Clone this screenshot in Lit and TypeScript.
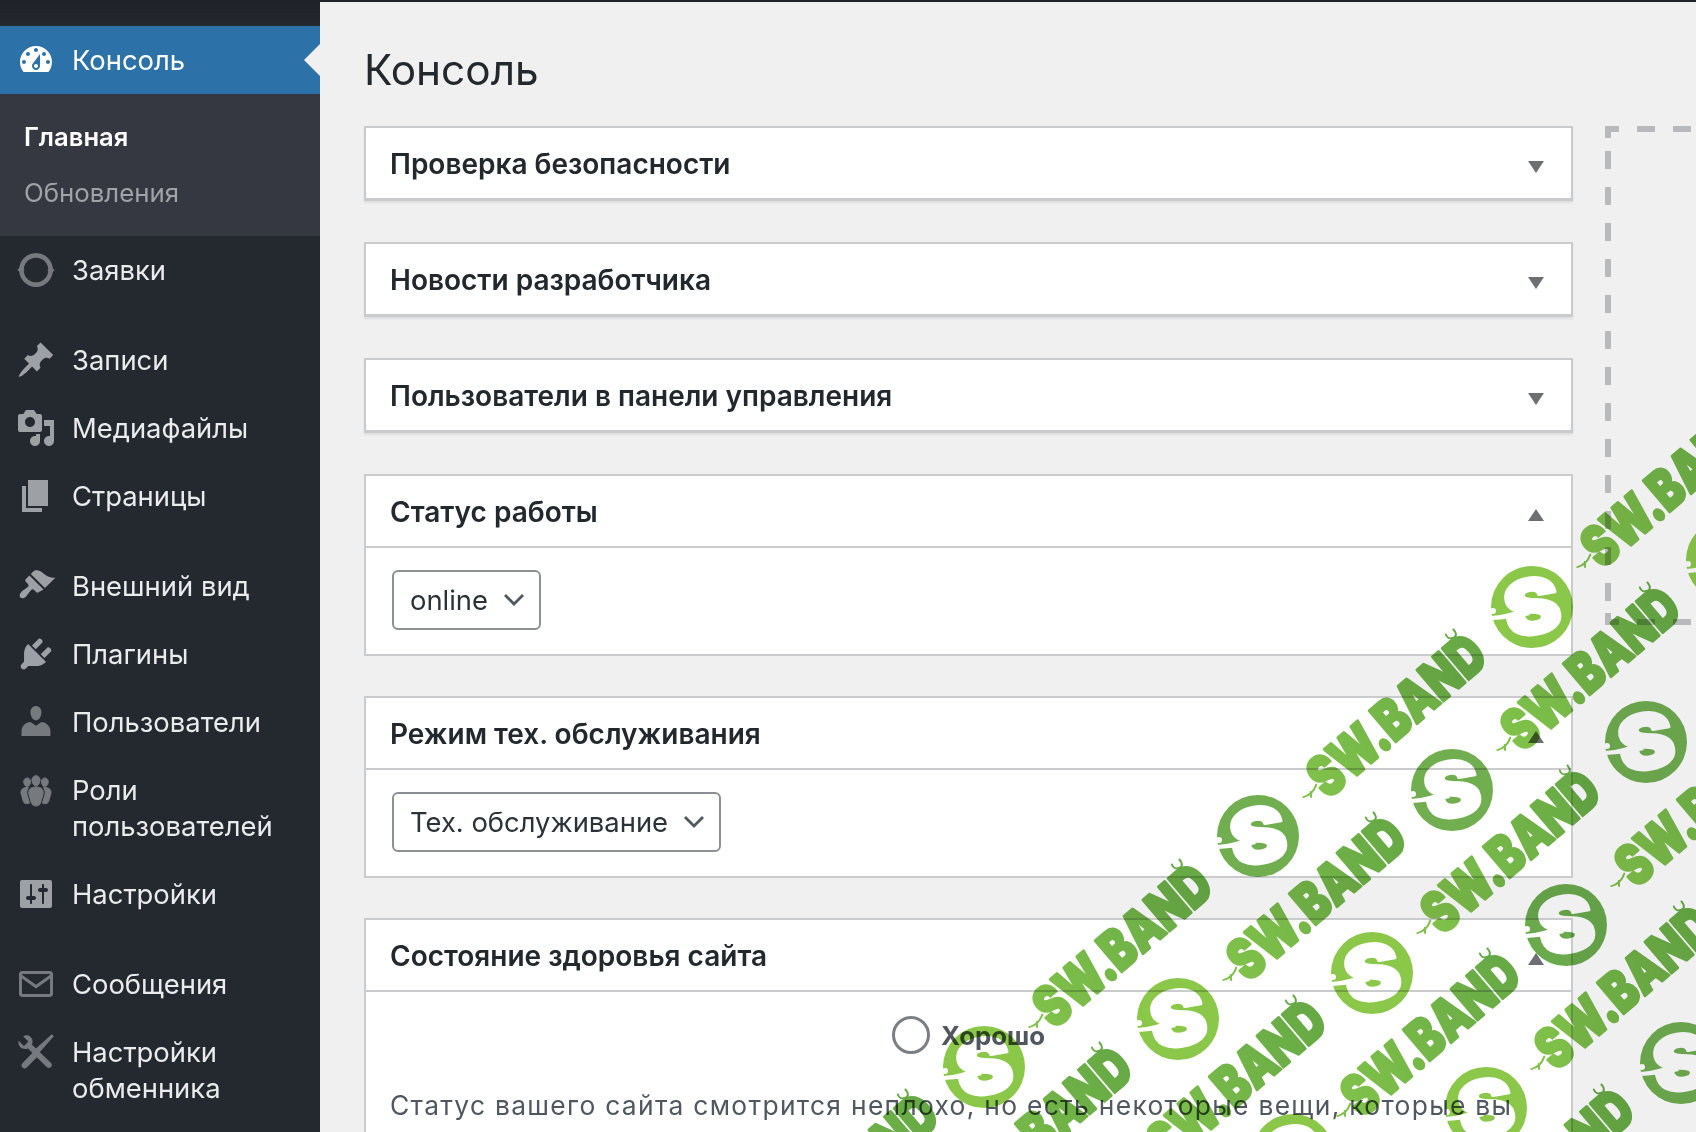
import { LitElement, html, css, svg } from 'lit';

// dashicons-style glyphs on a 20x20 box
const ICONS: Record<string, ReturnType<typeof svg>> = {
  dashboard: svg`<path d="M3.76 16h12.48c1.1-1.37 1.76-3.11 1.76-5 0-4.42-3.58-8-8-8s-8 3.58-8 8c0 1.89.66 3.63 1.76 5zM10 4c.55 0 1 .45 1 1s-.45 1-1 1-1-.45-1-1 .45-1 1-1zM6 6c.55 0 1 .45 1 1s-.45 1-1 1-1-.45-1-1 .45-1 1-1zm8 0c.55 0 1 .45 1 1s-.45 1-1 1-1-.45-1-1 .45-1 1-1zm-5.37 5.55L12 7v6c0 1.1-.9 2-2 2s-2-.9-2-2c0-.57.24-1.08.63-1.45zM4 10c.55 0 1 .45 1 1s-.45 1-1 1-1-.45-1-1 .45-1 1-1zm12 0c.55 0 1 .45 1 1s-.45 1-1 1-1-.45-1-1 .45-1 1-1zm-5 3c0-.55-.45-1-1-1s-1 .45-1 1 .45 1 1 1 1-.45 1-1z"/>`,
  ring: svg`<circle cx="10" cy="10" r="7.3" fill="none" stroke="currentColor" stroke-width="2.3"/><path d="M.6 10l1.9-1.7 1.9 1.7-1.9 1.3zM15.6 10l1.9-1.3 1.9 1.3-1.9 1.7z"/>`,
  pin: svg`<path d="M10.44 3.02l1.82-1.82 6.36 6.35-1.83 1.82c-1.05-.68-2.48-.57-3.41.36l-.75.75c-.92.93-1.04 2.35-.35 3.41l-1.83 1.82-2.41-2.41-2.8 2.79c-.42.42-3.38 2.71-3.8 2.29s1.86-3.39 2.28-3.81l2.79-2.79L4.1 9.36l1.83-1.82c1.05.69 2.48.57 3.4-.36l.75-.75c.93-.92 1.05-2.35.36-3.41z"/>`,
  media: svg`<path d="M13 11V4c0-.55-.45-1-1-1h-1.67L9 1H5L3.67 3H2c-.55 0-1 .45-1 1v7c0 .55.45 1 1 1h10c.55 0 1-.45 1-1zM7 4.5c1.38 0 2.5 1.12 2.5 2.5S8.38 9.5 7 9.5 4.5 8.38 4.5 7 5.62 4.5 7 4.5zM14 6h5v10.5c0 1.38-1.12 2.5-2.5 2.5S14 17.88 14 16.5s1.12-2.5 2.5-2.5c.17 0 .34.02.5.05V9h-3V6zm-4 8.05V13h2v3.5c0 1.38-1.12 2.5-2.5 2.5S7 17.88 7 16.5 8.12 14 9.5 14c.17 0 .34.02.5.05z"/>`,
  page: svg`<path d="M6 15V2h10v13H6zm-1 1h8v2H3V5h2v11z"/>`,
  brush: svg`<path d="M14.48 11.06L7.41 3.99l1.5-1.5c.5-.56 2.3-.47 3.51.32 1.21.8 1.43 1.28 2.91 2.1 1.18.64 2.45 1.26 4.45.85zm-.71.71L6.7 4.7 4.93 6.47c-.39.39-.39 1.02 0 1.41l1.06 1.06c.39.39.39 1.03 0 1.42-.6.6-1.43 1.11-2.21 1.69-.35.26-.7.53-1.01.84-1.11 1.12-1.2 2.2-.6 2.9.6.6 1.8.5 2.9-.6.31-.31.58-.66.84-1.01.58-.78 1.09-1.61 1.69-2.21.39-.39 1.03-.39 1.42 0l1.06 1.06c.39.39 1.02.39 1.41 0z"/>`,
  plug: svg`<path d="M13.11 4.36L9.87 7.6 8 5.73l3.24-3.24c.35-.34 1.05-.2 1.56.32.52.51.66 1.21.31 1.55zm-8 1.77l.91-1.12 9.01 9.01-1.19.84c-.71.71-2.63 1.16-3.82 1.16H6.14L4.9 17.26c-.59.59-1.54.59-2.12 0-.59-.58-.59-1.53 0-2.12l1.24-1.24v-3.88c0-1.13.4-3.19 1.09-3.89zm7.26 3.97l3.24-3.24c.34-.35 1.04-.21 1.55.31.52.51.66 1.21.31 1.55l-3.24 3.25z"/>`,
  user: svg`<path d="M10 9.25c-2.27 0-2.73-3.44-2.73-3.44C7 4.02 7.82 2 9.97 2c2.16 0 2.98 2.02 2.71 3.81 0 0-.41 3.44-2.68 3.44zm0 2.57L12.72 10c2.39 0 4.52 2.33 4.52 4.53V17H2.76v-2.47c0-2.25 1.94-4.48 4.47-4.48z"/>`,
  groups: svg`<path stroke="currentColor" stroke-width=".5" d="M8.03 4.46c-.29 1.28.55 3.46 1.97 3.46 1.41 0 2.25-2.18 1.96-3.46-.22-.98-1.08-1.63-1.96-1.63-.89 0-1.74.65-1.97 1.63zm-4.13.9c-.25 1.08.47 2.93 1.67 2.93s1.92-1.85 1.67-2.93c-.19-.83-.92-1.39-1.67-1.39s-1.48.56-1.67 1.39zm8.86 0c-.25 1.08.47 2.93 1.66 2.93 1.2 0 1.92-1.85 1.67-2.93-.19-.83-.92-1.39-1.67-1.39-.74 0-1.47.56-1.66 1.39zm-.59 11.43l1.25-4.3C14.2 10 12.71 8.47 10 8.47c-2.72 0-4.21 1.53-3.44 4.02l1.26 4.3C8.05 17.51 9 18 10 18c.98 0 1.94-.49 2.17-1.21zm-6.1-7.63c-.49.67-.96 1.83-.42 3.59l1.12 3.79c-.34.2-.77.31-1.2.31-.85 0-1.65-.41-1.85-1.03l-1.07-3.65c-.65-2.11.61-3.4 2.92-3.4.27 0 .54.02.79.06-.1.1-.2.22-.29.33zm8.35-.39c2.31 0 3.58 1.29 2.92 3.4l-1.07 3.65c-.2.62-1 1.03-1.85 1.03-.43 0-.86-.11-1.2-.31l1.11-3.77c.55-1.78.08-2.94-.42-3.61-.08-.11-.18-.23-.28-.33.25-.04.51-.06.79-.06z"/>`,
  sliders: svg`<path d="M18 16V4c0-.55-.45-1-1-1H3c-.55 0-1 .45-1 1v12c0 .55.45 1 1 1h14c.55 0 1-.45 1-1zM8 11h1c.55 0 1 .45 1 1s-.45 1-1 1H8v1.5c0 .28-.22.5-.5.5s-.5-.22-.5-.5V13H6c-.55 0-1-.45-1-1s.45-1 1-1h1V5.5c0-.28.22-.5.5-.5s.5.22.5.5V11zm5-2h-1c-.55 0-1-.45-1-1s.45-1 1-1h1V5.5c0-.28.22-.5.5-.5s.5.22.5.5V7h1c.55 0 1 .45 1 1s-.45 1-1 1h-1v5.5c0 .28-.22.5-.5.5s-.5-.22-.5-.5V9z"/>`,
  mail: svg`<path fill-rule="evenodd" d="M3 3.5h14c.83 0 1.5.67 1.5 1.5v10c0 .83-.67 1.5-1.5 1.5H3c-.83 0-1.5-.67-1.5-1.5V5c0-.83.67-1.5 1.5-1.5zM3 5v.4l7 5 7-5V5H3zm14 2.2l-7 5-7-5V15h14V7.2z"/>`,
  tools: svg`<path d="M17.9 1.1l1 1-7.6 8.6-1.9-1.9zM8.9 9.8l2.2 2.2-5.7 5.8c-.6.6-1.6.6-2.2 0s-.6-1.6 0-2.2z"/><path d="M1.3 4.4L4 7l2.2-2.2-2.6-2.6C5.3 1 7.5 1.9 8.1 3.7c.3.9.2 1.8-.2 2.5l9.4 9c.8.8.8 1.7.2 2.3s-1.6.6-2.3-.1L6 8.2c-.8.4-1.8.4-2.7.1C1.7 7.5.9 6.1 1.3 4.4z"/>`,
};

const NAV = [
  { icon: 'ring', label: 'Заявки', dim: true },
  { icon: 'pin', label: 'Записи', gap: true },
  { icon: 'media', label: 'Медиафайлы' },
  { icon: 'page', label: 'Страницы' },
  { icon: 'brush', label: 'Внешний вид', gap: true },
  { icon: 'plug', label: 'Плагины' },
  { icon: 'user', label: 'Пользователи', dim: true },
  { icon: 'groups', label: 'Роли пользователей', dim: true },
  { icon: 'sliders', label: 'Настройки' },
  { icon: 'mail', label: 'Сообщения', gap: true, dim: true },
  { icon: 'tools', label: 'Настройки обменника', dim: true },
];

// watermark lattice: one step along a row, one step to the next row
const STEP_A = [194, -47];
const STEP_B = [114, 136];

const BADGES = [
  { x: 1532, y: 607, c: '#8bc84a' },
  { x: 1727, y: 560, c: '#8bc84a' },
  { x: 1646, y: 742, c: '#70ae50' },
  { x: 1452, y: 790, c: '#70ae50' },
  { x: 1258, y: 836, c: '#70ae50' },
  { x: 1566, y: 925, c: '#6aaa4c' },
  { x: 1372, y: 973, c: '#8bc84a' },
  { x: 1178, y: 1019, c: '#8bc84a' },
  { x: 984, y: 1067, c: '#8bc84a' },
  { x: 1681, y: 1063, c: '#70ae50' },
  { x: 1486, y: 1108, c: '#8bc84a' },
  { x: 1293, y: 1155, c: '#8bc84a' },
];

const WORDS: [number, number][] = [
  [2, -1], [0, 0], [1, 0],
  [-2, 1], [-1, 1], [0, 1], [1, 1],
  [-4, 2], [-3, 2], [-2, 2], [-1, 2], [0, 2],
  [-1, 3],
];

class SwMark extends LitElement {
  static styles = css`
    :host {
      position: absolute;
      inset: 0;
      pointer-events: none;
      mix-blend-mode: multiply;
    }
    svg { display: block; }
    .word { font: 900 56px Inter, sans-serif; stroke-width: 3px; stroke-linejoin: round; }
    .letter { font: 900 76px Inter, sans-serif; stroke: #fff; stroke-width: 3px; stroke-linejoin: round; }
  `;

  render() {
    return html`
      <svg width="1696" height="1132" viewBox="0 0 1696 1132">
        <defs>
          <linearGradient id="wm">
            <stop offset="0" stop-color="#80c14a"></stop>
            <stop offset="1" stop-color="#66a945"></stop>
          </linearGradient>
        </defs>
        ${WORDS.map(([i, j]) => {
          const x = 1394 + i * STEP_A[0] + j * STEP_B[0];
          const y = 717 + i * STEP_A[1] + j * STEP_B[1];
          return svg`
            <g transform="translate(${x} ${y}) rotate(-40.5)">
              <text class="word" fill="url(#wm)" stroke="url(#wm)" x="-104" y="20" textLength="214" lengthAdjust="spacingAndGlyphs">SW.BAND</text>
              <path d="M-121 2c6 3 11 3 18-1M-112 3l-3 4" fill="none" stroke="#7fc04a" stroke-width="2" stroke-linecap="round"></path>
              <path d="M96-22c3 2 6 0 6-6M96-22c-3-1-4-4-3-7" fill="none" stroke="#66a945" stroke-width="2" stroke-linecap="round"></path>
            </g>
          `;
        })}
        ${BADGES.map((b) => svg`
          <g transform="translate(${b.x} ${b.y})">
            <circle r="41" fill=${b.c}></circle>
            <text class="letter" fill="#fff" text-anchor="middle" y="27" transform="rotate(-10) scale(1.12 1)">S</text>
            <path d="M-41 9C-28 8-16 5-8 0L-2 8C-14 11-28 12-40 13z" fill="#fff"></path>
            <circle cx="-39" cy="4" r="3" fill="#fff"></circle>
          </g>
        `)}
      </svg>
    `;
  }
}
customElements.define('sw-mark', SwMark);

class AppRoot extends LitElement {
  static styles = css`
    :host {
      display: block;
      position: relative;
      height: 100vh;
      overflow: hidden;
      font-family: Inter, "Noto Sans", sans-serif;
      color: #23282d;
      background: #f0f0f1;
    }
    .layout { display: flex; height: 100%; }

    .sidebar {
      width: 320px;
      flex: none;
      background: linear-gradient(#1e2127, #24282f 26px);
      padding-top: 26px;
      color: #e9ebed;
      font-size: 27.4px;
      line-height: 36px;
    }
    .nav-item {
      display: flex;
      align-items: flex-start;
      gap: 16px;
      padding: 16px;
    }
    .nav-item svg {
      width: 40px;
      height: 40px;
      margin: -2px 0;
      flex: none;
      fill: currentColor;
      color: #9da1a6;
    }
    .nav-item.dim svg { color: #76797e; }
    .nav-item.gap { margin-top: 22px; }
    .nav-item .label { width: 220px; }
    .nav-item.active {
      position: relative;
      background: #2c72a8;
      color: #fff;
    }
    .nav-item.active svg { color: #fff; }
    .nav-item.active::after {
      content: "";
      position: absolute;
      right: 0;
      top: 18px;
      border: 16px solid transparent;
      border-right-color: #f0f0f1;
      border-left-width: 0;
    }
    .submenu {
      background: #353840;
      padding: 15px 0;
      font-size: 25.8px;
    }
    .submenu div {
      padding: 10px 24px;
      color: #9ea3a8;
    }
    .submenu .current { color: #fff; font-weight: 600; font-size: 25.6px; }

    .main {
      flex: 1;
      min-width: 0;
      border-top: 2px solid #1f2226;
      padding-left: 44px;
      overflow: hidden;
    }
    h1 {
      margin: 48px 0 36px;
      font-size: 42.3px;
      line-height: 40px;
      font-weight: 400;
    }
    .columns { display: flex; gap: 32px; align-items: flex-start; }
    .cards { width: 1209px; flex: none; }
    .card {
      background: #fff;
      border: 2px solid #c9cbcd;
      margin-bottom: 40px;
    }
    .card.closed {
      border-bottom-width: 3px;
      margin-bottom: 41px;
      box-shadow: 0 2px 2px rgba(0, 0, 0, 0.08);
    }
    .card-head {
      height: 70px;
      display: flex;
      align-items: center;
      justify-content: space-between;
      padding: 0 27px 0 24px;
    }
    .card-head h2 {
      margin: 2px 0 0;
      font-size: 28px;
      font-weight: 640;
    }
    .toggle { width: 16px; height: 12px; margin-top: 7px; fill: #6d6f72; }
    .card-body {
      border-top: 2px solid #c9cbcd;
      padding: 22px 26px 24px;
    }
    .select {
      display: inline-flex;
      align-items: center;
      gap: 14px;
      height: 60px;
      box-sizing: border-box;
      border: 2px solid #8c8f94;
      border-radius: 6px;
      padding: 0 13px 0 16px;
      font-size: 27.4px;
      color: #2c3338;
    }
    .select svg { width: 24px; height: 24px; fill: none; stroke: #50575e; stroke-width: 2.8; }
    .health {
      display: flex;
      justify-content: center;
      align-items: center;
      gap: 11px;
      padding-top: 2px;
      font-size: 25.8px;
      font-weight: 700;
      color: #50575e;
    }
    .health i {
      width: 38px;
      height: 38px;
      box-sizing: border-box;
      border-radius: 50%;
      border: 3px solid #7b7e82;
    }
    .note {
      margin: 33px 0 0 -2px;
      font-size: 26.4px;
      letter-spacing: 1.3px;
      line-height: 36px;
      color: #50575e;
      white-space: nowrap;
    }

    .dropzone {
      width: 200px;
      height: 499px;
      flex: none;
      background:
        linear-gradient(#b7b9bb, #b7b9bb) 0 0 / 6px 12px no-repeat,
        linear-gradient(#b7b9bb, #b7b9bb) 0 100% / 6px 12px no-repeat,
        linear-gradient(90deg, #b7b9bb 18px, transparent 18px) -4px 0 / 36px 6px repeat-x,
        linear-gradient(90deg, #b7b9bb 18px, transparent 18px) -4px 100% / 36px 6px repeat-x,
        linear-gradient(#b7b9bb 18px, transparent 18px) 0 25px / 6px 36px repeat-y;
    }
  `;

  _icon(name: string) {
    return html`<svg viewBox="0 0 20 20">${ICONS[name]}</svg>`;
  }

  _toggle(open: boolean) {
    return html`<svg class="toggle" viewBox="0 0 16 12"><path d=${open ? 'M8 0l8 12H0z' : 'M0 0h16L8 12z'}></path></svg>`;
  }

  _closed(title: string) {
    return html`
      <section class="card closed">
        <div class="card-head"><h2>${title}</h2>${this._toggle(false)}</div>
      </section>
    `;
  }

  _select(value: string) {
    return html`
      <div class="select">
        ${value}
        <svg viewBox="0 0 24 24"><path d="M3 7l9 9 9-9"></path></svg>
      </div>
    `;
  }

  render() {
    return html`
      <div class="layout">
        <nav class="sidebar">
          <div class="nav-item active">${this._icon('dashboard')}<span class="label">Консоль</span></div>
          <div class="submenu">
            <div class="current">Главная</div>
            <div>Обновления</div>
          </div>
          ${NAV.map((item) => html`
            <div class="nav-item ${item.gap ? 'gap' : ''} ${item.dim ? 'dim' : ''}">
              ${this._icon(item.icon)}<span class="label">${item.label}</span>
            </div>
          `)}
        </nav>
        <main class="main">
          <h1>Консоль</h1>
          <div class="columns">
            <div class="cards">
              ${this._closed('Проверка безопасности')}
              ${this._closed('Новости разработчика')}
              ${this._closed('Пользователи в панели управления')}
              <section class="card">
                <div class="card-head"><h2>Статус работы</h2>${this._toggle(true)}</div>
                <div class="card-body">${this._select('online')}</div>
              </section>
              <section class="card">
                <div class="card-head"><h2>Режим тех. обслуживания</h2>${this._toggle(true)}</div>
                <div class="card-body">${this._select('Тех. обслуживание')}</div>
              </section>
              <section class="card">
                <div class="card-head"><h2>Состояние здоровья сайта</h2>${this._toggle(true)}</div>
                <div class="card-body">
                  <div class="health"><i></i>Хорошо</div>
                  <p class="note">Статус вашего сайта смотрится неплохо, но есть некоторые вещи, которые вы</p>
                </div>
              </section>
            </div>
            <div class="dropzone"></div>
          </div>
        </main>
      </div>
      <sw-mark></sw-mark>
    `;
  }
}
customElements.define('app-root', AppRoot);
